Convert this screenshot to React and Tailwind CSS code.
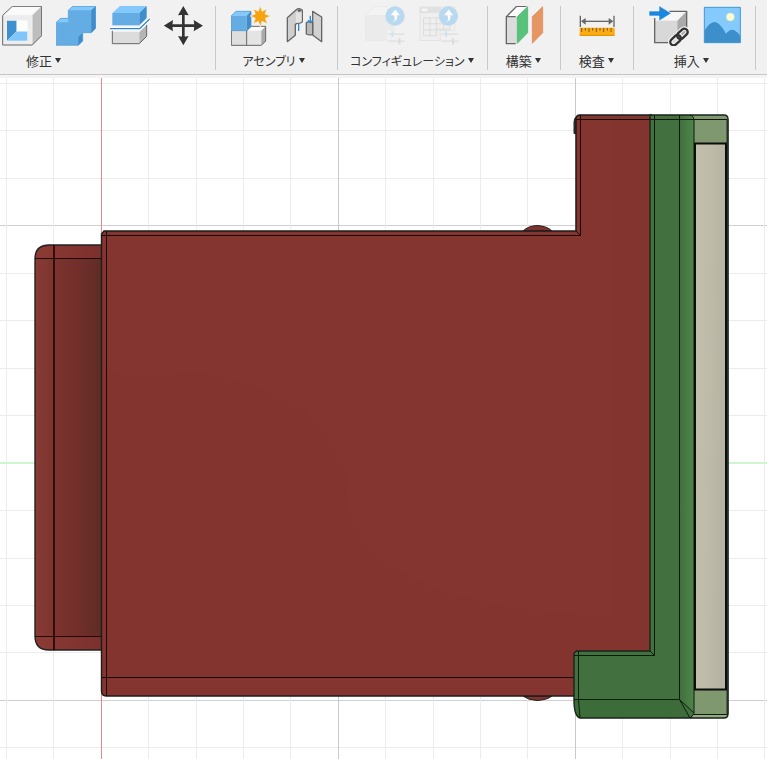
import React from 'react';

// Modify
const ShellIcon = () => (
  <svg viewBox="6 18 120 120" className="w-10 h-10" strokeLinejoin="round">
    <path d="M8 46 L37 19 H125 L97 46 Z" fill="#fafafa" />
    <path d="M97 46 L125 19 V107 L97 135 Z" fill="#bdbdbd" />
    <path d="M8 46 H97 V135 H8 Z" fill="#ededed" />
    <path d="M21 62 H82 V122 H21 Z" fill="#fff" />
    <path d="M21 62 L50 62 V94 L21 122 Z" fill="#3d8fce" />
    <path d="M21 122 L50 94 H82 V122 Z" fill="#80c6fb" />
    <path d="M50 62 H82 V94 H50 Z" fill="#fdfdfd" />
    <path d="M8 46 L37 19 H125 V107 L97 135 H8 Z" fill="none" stroke="#666" strokeWidth="3" />
  </svg>
);

const CombineIcon = () => (
  <svg viewBox="168 18 120 120" className="w-10 h-10" strokeLinejoin="round">
    <path d="M169 67 L182 55 H205 V31 L218 19 H287 V85 L274 98 H248 V123 L235 136 H169 Z" fill="#63ade4" />
    <path d="M205 31 L218 19 H287 L274 31 Z M169 67 L182 55 H205 V67 Z" fill="#84c9fb" />
    <path d="M274 31 L287 19 V85 L274 98 Z M235 111 L248 98 V123 L235 136 Z" fill="#3f8dca" />
    <path d="M169 67 L182 55 H205 V31 L218 19 H287 V85 L274 98 H248 V123 L235 136 H169 Z" fill="none" stroke="#4b9ad6" strokeWidth="2" />
  </svg>
);

const SplitIcon = () => (
  <svg viewBox="330 18 120 120" className="w-10 h-10" strokeLinejoin="round">
    <path d="M337 39 L360 18 H440 L418 39 Z" fill="#84c9fb" />
    <path d="M337 39 H418 V76 H337 Z" fill="#63ade4" />
    <path d="M418 39 L440 18 V54 L418 76 Z" fill="#3f8dca" />
    <path d="M337 96 H418 V131 H337 Z" fill="#dcdcdc" />
    <path d="M418 96 L440 75 V109 L418 131 Z" fill="#b5b5b5" />
    <path d="M337 92 V131 H418 L440 109 V74" fill="none" stroke="#666" strokeWidth="3" />
    <path d="M328 86 H419 L449 57" fill="none" stroke="#fff" strokeWidth="11" />
    <path d="M328 86 H419 L449 57" fill="none" stroke="#2d86cf" strokeWidth="4" />
  </svg>
);

const MoveIcon = () => (
  <svg viewBox="492 18 120 120" className="w-10 h-10" fill="#333">
    <path d="M546 40 H554 V73 H585 V81 H554 V113 H546 V81 H515 V73 H546 Z" />
    <path d="M550 18 L566 46 Q550 43 534 46 Z M550 136 L566 108 Q550 111 534 108 Z" />
    <path d="M491 77 L519 60 Q516 77 519 94 Z M609 77 L581 60 Q584 77 581 94 Z" />
  </svg>
);

// Assembly
const NewComponentIcon = () => (
  <svg viewBox="63 18 120 120" className="w-10 h-10" strokeLinejoin="round">
    <path d="M64 92 H110 V136 H64 Z" fill="#dedede" />
    <path d="M110 92 L124 79 H167 L154 92 Z" fill="#fff" />
    <path d="M110 92 H154 V136 H110 Z" fill="#e4e4e4" />
    <path d="M154 92 L167 79 V123 L154 136 Z" fill="#aaa" />
    <path d="M64 92 V136 H154 L167 123 V79 H124 L110 92 V136" fill="none" stroke="#666" strokeWidth="3" />
    <path d="M64 47 L78 34 H123 L110 47 Z" fill="#84c9fb" />
    <path d="M64 47 H110 V92 H64 Z" fill="#63ade4" />
    <path d="M110 47 L123 34 V79 L110 92 Z" fill="#3f8dca" />
    <path d="M64 47 L78 34 H123 V79 L110 92 H64 Z" fill="none" stroke="#3f8dca" strokeWidth="2" />
    <path
      d="M151 17 L156 34 L171 27 L165 42 L182 48 L166 55 L172 71 L156 64 L151 81 L145 64 L130 71 L136 55 L120 48 L136 42 L130 27 L145 34 Z"
      fill="#f7a30f"
      stroke="#f3f3f3"
      strokeWidth="2"
    />
  </svg>
);

const JointIcon = () => (
  <svg viewBox="225 18 120 120" className="w-10 h-10" strokeLinejoin="round">
    <path d="M266 70 V93" stroke="#2d86cf" strokeWidth="4" />
    <path d="M232 53 L258 30 Q268 22 277 31 V65 Q274 70 261 70 L256 73 V106 L232 125 Z" fill="#cfcfcf" stroke="#666" strokeWidth="4" />
    <path d="M258 40 V68 Q270 70 275 64 V36 Q266 41 258 36 Z" fill="#e2e2e2" />
    <ellipse cx="268" cy="32" rx="5" ry="3" fill="#555" />
    <path d="M308 34 L335 51 V125 L308 105 Z" fill="#d2d2d2" stroke="#666" strokeWidth="4" />
    <path d="M289 68 Q299 62 308 68 V103 Q298 107 289 102 Z" fill="#bababa" stroke="#666" strokeWidth="4" />
    <path d="M301 47 V67 M294 61 L301 68 L308 61" fill="none" stroke="#2d86cf" strokeWidth="4" />
  </svg>
);

// Configuration (disabled)
const UpBadge = ({ x }) => (
  <g transform={`translate(${x} 47)`}>
    <circle r="30" fill="#b9d9f0" />
    <path d="M-8 19 Q4 13 -3 -2 H-13 L1 -20 L15 -2 H6 Q10 15 -8 19 Z" fill="#fff" />
  </g>
);

const Sliders = ({ x }) => (
  <g transform={`translate(${x} 0)`} fill="none" strokeWidth="4">
    <path d="M0 103 H53 M0 125 H53" stroke="#dedede" />
    <path d="M15 94 V112" stroke="#cfe2ee" strokeWidth="6" />
    <path d="M37 116 V135" stroke="#dadada" strokeWidth="6" />
  </g>
);

const ConfigureIcon = () => (
  <svg viewBox="90 18 124 120" className="w-10 h-10">
    <path d="M92 44 L119 18 H178 V44 Z" fill="#f3f3f3" />
    <path d="M92 44 H182 V92 H158 V122 H92 Z" fill="#ebebeb" />
    <path d="M158 122 H92 V44 L119 18 H160" fill="none" stroke="#e4e4e4" strokeWidth="2" />
    <UpBadge x={183} />
    <Sliders x={160} />
  </svg>
);

const ConfigTableIcon = () => (
  <svg viewBox="252 18 124 120" className="w-10 h-10">
    <path d="M255 19 H363 V92 H318 V123 H255 Z" fill="#efefef" stroke="#e2e2e2" strokeWidth="3" />
    <path d="M255 19 H320 V38 H255 Z" fill="#e1e1e1" />
    <path d="M261 24 H278 V32 H261 Z" fill="#f6f6f6" />
    <path d="M266 53 H348 V88 H306 V108 H266 Z M266 71 H350 M266 90 H315 M286 53 V108 M306 53 V108 M328 53 V90" fill="none" stroke="#dcdcdc" strokeWidth="3" />
    <UpBadge x={343} />
    <Sliders x={321} />
  </svg>
);

// Construct
const PlaneIcon = () => (
  <svg viewBox="69 18 120 120" className="w-10 h-10" strokeLinejoin="round">
    <path d="M76 50 L107 19 H139 L108 50 Z" fill="#fff" />
    <path d="M76 50 H108 V131 H76 Z" fill="#dcdcdc" />
    <path d="M104 131 H76 V50 L107 19 H136 M76 50 H104" fill="none" stroke="#666" strokeWidth="4" />
    <path d="M109 50 L140 20 V98 L109 130 Z" fill="#55c37a" stroke="#45ad69" strokeWidth="2" />
    <path d="M154 50 L185 20 V98 L154 130 Z" fill="#e69563" stroke="#d98450" strokeWidth="2" />
  </svg>
);

// Inspect
const MeasureIcon = () => (
  <svg viewBox="291 18 120 120" className="w-10 h-10">
    <path d="M301 47 V81 M402 47 V81" stroke="#666" strokeWidth="4" />
    <path d="M310 64 H394" stroke="#666" strokeWidth="4" />
    <path d="M303 64 L317 54 V74 Z M400 64 L386 54 V74 Z" fill="#666" />
    <path d="M299 83 H404 V108 H299 Z" fill="#fbac14" />
    <path d="M299 106 H404" stroke="#e39200" strokeWidth="3" />
    <path
      d="M305 84 V96 M316 84 V92 M327 84 V96 M338 84 V92 M349 84 V96 M360 84 V92 M371 84 V96 M382 84 V92 M393 84 V96"
      stroke="#7a5a1c"
      strokeWidth="3"
    />
  </svg>
);

// Insert
const DeriveIcon = () => (
  <svg viewBox="69 18 120 120" className="w-10 h-10" strokeLinejoin="round">
    <path d="M86 62 L114 34 H182 L154 62 Z" fill="#f6f6f6" />
    <path d="M86 62 H154 V128 H86 Z" fill="#d8d8d8" />
    <path d="M154 62 L182 34 V100 L154 128 Z" fill="#aaa" />
    <path d="M130 128 H86 V54 M130 34 H182 V88" fill="none" stroke="#666" strokeWidth="4" />
    <path d="M69 33 H99 V17 L136 40 L99 63 V48 H69 Z" fill="#1c86de" stroke="#f4f4f4" strokeWidth="2" />
    <g transform="rotate(-43 159 111)">
      <g fill="none" stroke="#f0f0f0" strokeWidth="14">
        <rect x="127" y="101" width="36" height="20" rx="10" />
        <rect x="155" y="101" width="36" height="20" rx="10" />
      </g>
      <g fill="none" stroke="#333" strokeWidth="7">
        <rect x="127" y="101" width="36" height="20" rx="10" />
        <rect x="155" y="101" width="36" height="20" rx="10" />
      </g>
    </g>
  </svg>
);

const CanvasIcon = () => (
  <svg viewBox="231 18 120 120" className="w-10 h-10">
    <path d="M235 22 H343 V128 H235 Z" fill="#84cafc" />
    <path d="M235 93 Q250 66 267 66 Q283 69 300 101 Q314 84 325 91 Q335 96 343 109 V128 H235 Z" fill="#3d8fcc" />
    <circle cx="313" cy="51" r="12" fill="#fdfbd4" stroke="#d9e6b9" strokeWidth="2" />
    <path d="M235 22 H343 V128 H235 Z" fill="none" stroke="#4596d3" strokeWidth="3" />
  </svg>
);

const groups = [
  {
    label: '修正',
    className: 'pl-0.5 pr-[11px] items-start',
    labelClass: 'ml-6 text-[13px]',
    tools: [
      { name: 'シェル', Icon: ShellIcon },
      { name: '結合', Icon: CombineIcon },
      { name: '分割', Icon: SplitIcon },
      { name: '移動', Icon: MoveIcon },
    ],
  },
  {
    label: 'アセンブリ',
    className: 'pl-[15px] pr-3 items-center',
    labelClass: 'text-xs pr-2',
    tools: [
      { name: '新規コンポーネント', Icon: NewComponentIcon },
      { name: 'ジョイント', Icon: JointIcon },
    ],
  },
  {
    label: 'コンフィギュレーション',
    className: 'px-3 items-center',
    labelClass: 'text-xs',
    disabled: true,
    tools: [
      { name: 'デザインを設定', Icon: ConfigureIcon },
      { name: 'テーブル', Icon: ConfigTableIcon },
    ],
  },
  {
    label: '構築',
    className: 'px-4 items-center',
    labelClass: 'text-[13px]',
    tools: [{ name: 'オフセット平面', Icon: PlaneIcon }],
  },
  {
    label: '検査',
    className: 'px-4 items-center',
    labelClass: 'text-[13px]',
    tools: [{ name: '計測', Icon: MeasureIcon }],
  },
  {
    label: '挿入',
    className: 'pl-[15px] pr-3 items-center',
    labelClass: 'text-[13px] pr-2',
    tools: [
      { name: '派生', Icon: DeriveIcon },
      { name: 'キャンバス', Icon: CanvasIcon },
    ],
  },
];

function ToolGroup({ group }) {
  return (
    <>
      <div className={`flex flex-col shrink-0 gap-1.5 ${group.className}`}>
        <div className="flex gap-3.5">
          {group.tools.map(({ name, Icon }) => (
            <button key={name} type="button" aria-label={name} disabled={group.disabled} className="w-10 h-10 shrink-0">
              <Icon />
            </button>
          ))}
        </div>
        <button
          type="button"
          aria-haspopup="menu"
          className={`flex items-center gap-0.5 h-[18px] text-[#333] whitespace-nowrap [font-feature-settings:'palt'] ${group.labelClass}`}
        >
          {group.label}
          <svg viewBox="0 0 8 6" className="w-2 h-1.5 shrink-0" fill="#333">
            <path d="M1 0 H7 L4 5 Z" />
          </svg>
        </button>
      </div>
      <div className="w-px h-16 shrink-0 bg-[#c9c9c9]" />
    </>
  );
}

// Grid lines sit on half pixels so they stay one pixel wide
const columns = Array.from({ length: 17 }, (_, i) => Math.floor(6.5 + i * 47.4) + 0.5);
const rows = Array.from({ length: 15 }, (_, i) => Math.floor(83.5 + i * 47.45) + 0.5);

function Viewport() {
  return (
    <svg viewBox="0 78 767 681" className="block w-full h-auto" role="img" aria-label="モデル">
      <defs>
        <linearGradient id="cap" x1="0" x2="1" y1="0" y2="0">
          <stop offset="0" stopColor="#893b35" />
          <stop offset="0.28" stopColor="#7c342e" />
          <stop offset="0.6" stopColor="#742f2b" />
          <stop offset="1" stopColor="#5f2c26" />
        </linearGradient>
        <linearGradient id="capEdge" x1="0" x2="1" y1="0" y2="0">
          <stop offset="0" stopColor="#8d3a34" />
          <stop offset="1" stopColor="#7b302c" />
        </linearGradient>
        <linearGradient id="greenSide" x1="0" x2="1" y1="0" y2="0">
          <stop offset="0" stopColor="#42713f" />
          <stop offset="1" stopColor="#4d8549" />
        </linearGradient>
        <linearGradient id="panel" x1="0" x2="1" y1="0" y2="0.2">
          <stop offset="0" stopColor="#c3bfac" />
          <stop offset="0.5" stopColor="#bfbba9" />
          <stop offset="1" stopColor="#b6b3a3" />
        </linearGradient>
      </defs>

      {/* Grid, every fifth line is a major one */}
      {rows.map((y, i) => (
        <path key={y} d={`M0 ${y} H767`} stroke={i % 5 === 3 ? '#cfcfcf' : '#ececec'} />
      ))}
      {columns.map((x, i) => (
        <path key={x} d={`M${x} 78 V759`} stroke={i % 5 === 2 ? '#c9c9c9' : '#ececec'} />
      ))}

      {/* Axes */}
      <path d="M0 463 H767" stroke="#cdf7cd" strokeWidth="2" />
      <path d="M101.500 78 V759" stroke="#e08c8c" />

      {/* Left cap */}
      <path d="M102 245 H49 Q35 245 35 259 V636 Q35 650 49 650 H102 Z" fill="url(#cap)" />
      <path d="M102 245 H49 Q35 245 35 259 H102 Z M102 650 H49 Q35 650 35 636 H102 Z" fill="url(#capEdge)" />
      <path d="M102 245 H49 Q35 245 35 259 V636 Q35 650 49 650 H102" fill="none" stroke="#222" strokeWidth="1.4" />
      <path d="M35 258.500 H102 M35 636.500 H102" stroke="#200a08" />
      <path d="M54 245 V650" stroke="#2a0a08" strokeWidth="1.8" />

      {/* Pins above and below the body */}
      <path d="M523 231 Q528 226 537 225.500 Q547 226 552 231 Z M523 696 Q528 700 537 700.500 Q547 700 552 696 Z" fill="#7f332e" stroke="#222" />

      {/* Body */}
      <path d="M577 116 Q574 118 574 122 V133.500 H577 Z" fill="#333" stroke="#222" />
      <path d="M101.500 234 L104 231 H576 V119 Q576 115 580 115 H652 V696 H106 Q101.500 696 101.500 691 Z" fill="#84352f" />
      <path d="M107 372 C250 360 340 410 345 480 C350 570 440 610 612 616 V120 H649 V676 H107 Z" fill="#81342e" opacity="0.5" />
      <path d="M101.500 691 V234 L104 231 H576 V119 Q576 115 580 115 H652 M574 696 H106 Q101.500 696 101.500 691" fill="none" stroke="#1c1c1c" strokeWidth="1.4" />
      <path d="M106.500 231 V696 M102 235.500 H580.500 V115 M576 231 L580.500 235.500 M102 677.500 H574" fill="none" stroke="#1b0605" />

      {/* Green housing */}
      <path d="M650 115 H694 V718 H580 Q574 718 574 700 V655 Q574 651 578 651 H650 Z" fill="#42713f" />
      <path d="M680 115 H690 Q694 116 694 120 V712 L680 699 Z" fill="url(#greenSide)" />
      <path d="M574 700 H680 L690 718 H580 Q574 716 574 700 Z" fill="#3c6c3a" />
      <path d="M690 115 H724 Q728 115 728 119 V714 Q728 718 724 718 H692 L694 712 V120 Z" fill="#80986f" />
      <path d="M694 714 H728 Q728 718 724 718 H692 Z" fill="#94aa82" />
      <path d="M650 115 H724 Q728 115 728 119 V714 Q728 718 724 718 H580 Q574 716 574 700 V655 Q574 651 578 651 H650 Z" fill="none" stroke="#17251a" strokeWidth="1.4" />
      <path
        d="M654.500 115 V655.500 H574 M650 651 L654.500 655.500 M578.500 651 V700 L580 718 M574 699.500 H679.500 V115 M679.500 699.500 L690 718 M679.500 699.500 L694 713 M690 115 Q694 116 694 120 V714 L690 718 M694 714.500 H728"
        fill="none"
        stroke="#0b1c0b"
      />
      <path d="M576 119.500 H728" stroke="#15120d" />

      {/* Panel */}
      <path d="M727.500 119 V714" stroke="#26302a" strokeWidth="2" />
      <path d="M695 143.500 H726 V689.500 H695 Z" fill="url(#panel)" stroke="#0d0d0d" strokeWidth="2" />
    </svg>
  );
}

export default function App() {
  return (
    <div className="min-h-screen bg-white font-['Noto_Sans_CJK_JP',sans-serif]">
      <header className="bg-[#f4f4f4] pb-[3px]">
        <div role="toolbar" className="flex items-center h-[75px] pt-0.5 overflow-hidden bg-[#f1f1f1] border-b border-[#c6c6c6]">
          {groups.map((group) => (
            <ToolGroup key={group.label} group={group} />
          ))}
        </div>
      </header>
      <main>
        <Viewport />
      </main>
    </div>
  );
}
